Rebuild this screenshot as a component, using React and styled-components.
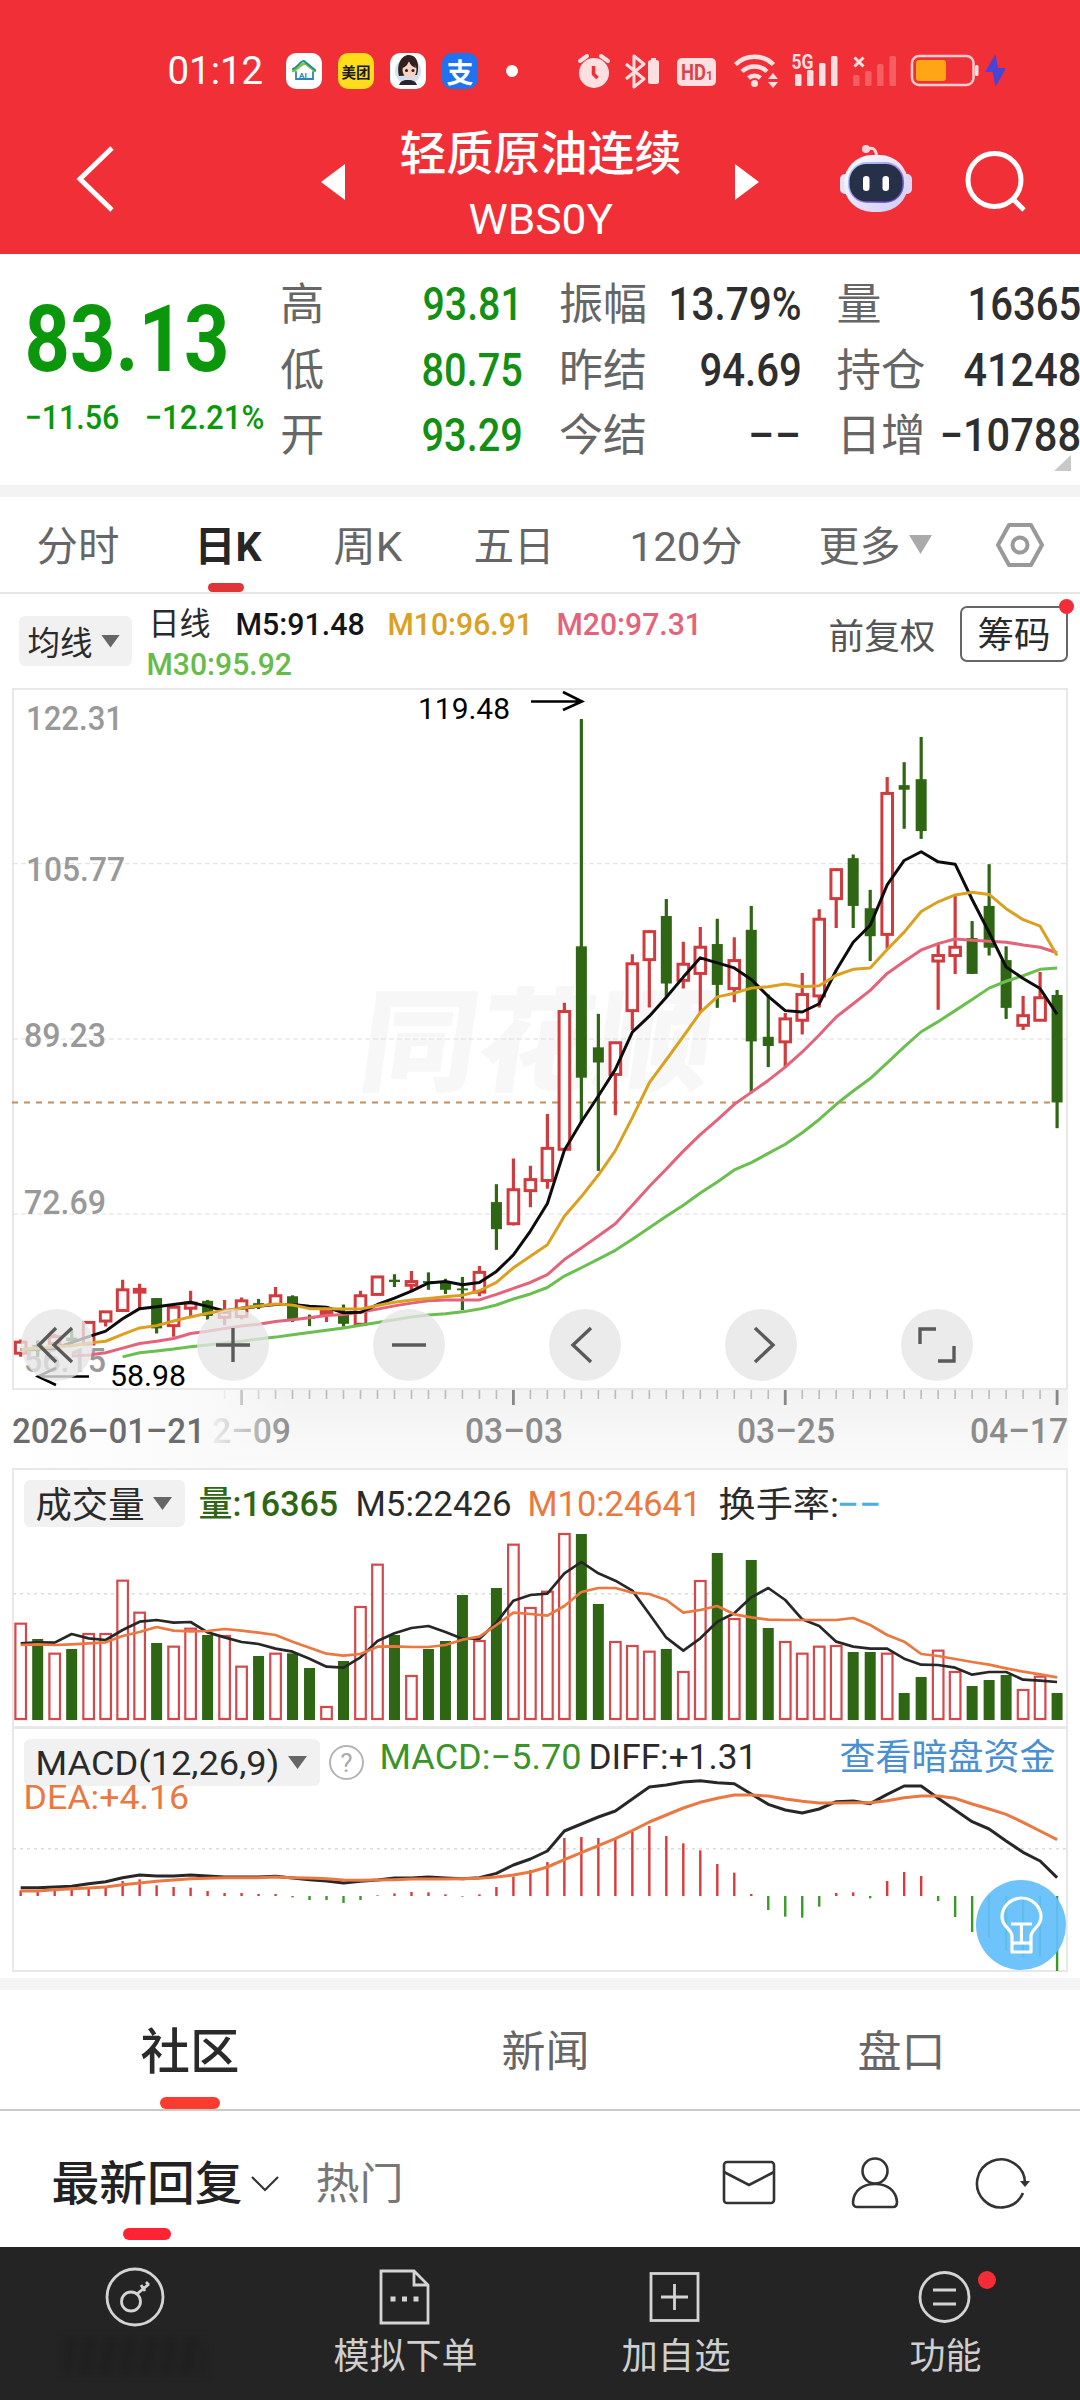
import React, { useLayoutEffect, useRef, useState } from "react";
import styled, { createGlobalStyle } from "styled-components";

const GlobalStyle = createGlobalStyle`
  * { box-sizing: border-box; }
  body {
    margin: 0;
    background: #fff;
    font-family: Roboto, "Noto Sans CJK SC", sans-serif;
    color: #2a2a2a;
  }
  svg { display: block; flex: none; }
`

/* ---------- text that fills a fixed width ---------- */

const FitBox = styled.div`
  flex: none;
  width: ${p => p.$w}px;
  margin-left: ${p => p.$ml || 0}px;
  height: ${p => p.$size}px;
  line-height: ${p => p.$size}px;
  font-size: ${p => p.$size}px;
  font-weight: ${p => p.$weight || 400};
  color: ${p => p.$color || 'inherit'};
  white-space: nowrap;
`
const FitInner = styled.span`
  display: inline-block;
  transform-origin: 0 50%;
`

const Fit = ({ w, ml, size, weight, color, dy = 0, children }) => {
  const ref = useRef(null)
  const [scale, setScale] = useState(1)
  useLayoutEffect(() => {
    setScale((w + 2) / ref.current.offsetWidth)
  }, [w, children])
  return (
    <FitBox $w={w} $ml={ml} $size={size} $weight={weight} $color={color}>
      <FitInner ref={ref} style={{ transform: `translate(-0.5px, ${dy}px) scaleX(${scale})` }}>{children}</FitInner>
    </FitBox>
  )
}

/* ---------- header ---------- */

const Page = styled.div`
  width: 1080px;
  height: 2400px;
  overflow: hidden;
  display: flex;
  flex-direction: column;
  background: #fff;
`
const Header = styled.header`
  height: 254px;
  background: #f12f37;
  color: #fff;
  display: flex;
  flex-direction: column;
  padding-top: 46px;
`
const StatusBar = styled.div`
  height: 50px;
  display: flex;
  align-items: center;
  padding-left: 168px;
`
const AppBadge = styled.div`
  width: 36px;
  height: 36px;
  margin-left: ${p => p.$ml || 16}px;
  border-radius: 10px;
  overflow: hidden;
  background: ${p => p.$bg};
  color: ${p => p.$color || '#fff'};
  display: flex;
  align-items: center;
  justify-content: center;
  font-size: ${p => p.$size || 15}px;
  font-weight: 700;
  white-space: nowrap;
`
const Dot = styled.i`
  width: 12px;
  height: 12px;
  border-radius: 50%;
  background: #fff;
  margin: 0 55px 0 28px;
`
const NavBar = styled.div`
  height: 158px;
  display: flex;
  padding-left: 72px;
`
const NavIcon = styled.div`
  padding-top: ${p => p.$top}px;
  margin-left: ${p => p.$ml || 0}px;
`
const TitleCol = styled.div`
  width: 280px;
  margin-left: 55px;
  padding-top: 34px;
  display: flex;
  flex-direction: column;
  align-items: center;
  gap: 21px;
`

const StatusIcons = () => (
  <svg width="440" height="50" viewBox="573 46 440 50" fill="#ffdfe0">
    <circle cx="594" cy="73" r="15" />
    <path d="M580 61l7-5M608 61l-7-5" stroke="#ffdfe0" strokeWidth="4" strokeLinecap="round" />
    <path d="M593.500 66v8l4 4" stroke="#f12f37" strokeWidth="3.500" fill="none" />
    <path d="M626 64l18 15-10 8V56l10 8-18 15" stroke="#ffdfe0" strokeWidth="3" fill="none" strokeLinejoin="round" />
    <rect x="648" y="60" width="11" height="24" rx="2.500" />
    <rect x="651" y="58" width="5" height="3" />
    <rect x="677" y="58" width="39" height="28" rx="5" />
    <text x="681" y="80" fontSize="22" fontWeight="700" fill="#d8444b" textLength="25" lengthAdjust="spacingAndGlyphs">HD</text>
    <text x="706" y="80" fontSize="12" fontWeight="700" fill="#d8444b">1</text>
    <g fill="none" stroke="#ffdfe0" strokeWidth="4.500">
      <path d="M735.500 64.500a27 27 0 0 1 38 0" />
      <path d="M742 71.500a18 18 0 0 1 25 0" />
      <path d="M748.500 78a9 9 0 0 1 12 0" />
    </g>
    <circle cx="754.500" cy="83.500" r="3.500" />
    <path d="M768 79l5-6 5 6zM768 82l5 6 5-6z" />
    <text x="791.500" y="69" fontSize="19.500" fontWeight="700" textLength="22" lengthAdjust="spacingAndGlyphs">5G</text>
    <rect x="795" y="74" width="6.500" height="12" rx="1.500" />
    <rect x="807" y="70" width="6.500" height="16" rx="1.500" />
    <rect x="819" y="63" width="6.500" height="23" rx="1.500" />
    <rect x="831" y="56" width="6.500" height="30" rx="1.500" />
    <path d="M854.500 57.500l9 9M863.500 57.500l-9 9" stroke="#ffdfe0" strokeWidth="3" />
    <g fill="#f75e64">
      <rect x="853" y="75" width="6.500" height="11" rx="1.500" />
      <rect x="865" y="71" width="6.500" height="15" rx="1.500" />
      <rect x="877" y="64" width="6.500" height="22" rx="1.500" />
      <rect x="889.500" y="56" width="6.500" height="30" rx="1.500" />
    </g>
    <rect x="912" y="56" width="61.500" height="29" rx="7" fill="none" stroke="#ffcfd0" strokeWidth="2.500" />
    <rect x="916" y="60" width="30" height="21" rx="3" fill="#ffa516" />
    <rect x="975" y="65" width="3.500" height="11" rx="1.500" />
    <path d="M995.500 54l-10.500 18h7.500l3 15 10.500-19h-8z" fill="#4b43d6" />
  </svg>
)

const HouseIcon = () => (
  <svg width="36" height="36" viewBox="0 0 36 36" fill="none" strokeLinecap="round">
    <path d="M7 18c6-2 8-9 13-7l9 7" stroke="#7cc142" strokeWidth="2.500" />
    <path d="M7 16c5-2 7-8 11-8l11 9" stroke="#1b8f8f" strokeWidth="2" />
    <path d="M10 19v7h17v-7" stroke="#2a86b8" strokeWidth="1.800" />
    <text x="13" y="24.500" fontSize="8" fontWeight="700" fill="#2a86b8">AI</text>
  </svg>
)

const FaceIcon = () => (
  <svg width="36" height="36" viewBox="0 0 36 36">
    <circle cx="18" cy="18" r="13" fill="#cfe0f2" />
    <path d="M9 23C6 12 11 2 19 2s11 9 8 20z" fill="#33211e" />
    <ellipse cx="19.500" cy="17" rx="7" ry="8.500" fill="#f6d3c6" />
    <path d="M12 15c5-1 6-5 7-7 1 4 4 6 7 7l-2-9h-9z" fill="#33211e" />
    <circle cx="16.500" cy="17.500" r="1.500" fill="#2b1a18" />
    <circle cx="23" cy="17.500" r="1.500" fill="#2b1a18" />
    <path d="M9 32c2-5 6-5 9-5s7 0 9 5z" fill="#26262b" />
  </svg>
)

const Robot = () => (
  <svg width="72" height="68" viewBox="0 0 72 68">
    <defs>
      <linearGradient id="shell" x1="0" y1="0" x2="1" y2="1">
        <stop offset="0" stopColor="#fff" />
        <stop offset="1" stopColor="#cfc9f7" />
      </linearGradient>
      <linearGradient id="rim" x1="0" y1="0" x2="1" y2="1">
        <stop offset="0" stopColor="#a8e0f0" />
        <stop offset=".5" stopColor="#a78bf0" />
        <stop offset="1" stopColor="#5a38c8" />
      </linearGradient>
    </defs>
    <path d="M27 5.500c6-3 9 0 9.500 6" stroke="#fbd9e0" strokeWidth="3" fill="none" />
    <circle cx="26" cy="5" r="4" fill="#f7d5dc" />
    <rect x="0" y="30" width="12" height="20" rx="5" fill="#e2e2fb" />
    <rect x="60" y="30" width="12" height="20" rx="5" fill="#dcd5f8" />
    <rect x="4" y="11" width="64" height="57" rx="28" fill="url(#shell)" />
    <rect x="8" y="18" width="56" height="41" rx="19" fill="url(#rim)" />
    <rect x="9.500" y="20" width="53" height="37.500" rx="17" fill="#263149" />
    <rect x="23" y="32" width="6.500" height="15" rx="3.200" fill="#fff" />
    <rect x="42.500" y="32" width="6.500" height="15" rx="3.200" fill="#fff" />
  </svg>
)

/* ---------- quote ---------- */

const Quote = styled.section`
  height: 243px;
  border-bottom: 12px solid #f3f3f3;
  display: flex;
`
const PriceCol = styled.div`
  width: 281px;
  padding: 40px 0 0 25px;
  color: #0b970b;
`
const ChangeRow = styled.div`
  display: flex;
  margin-top: 14px;
`
const StatCol = styled.div`
  width: ${p => p.$w}px;
  margin-right: ${p => p.$mr || 0}px;
  padding-top: 16px;
  position: relative;
`
const StatRow = styled.div`
  height: 65.700px;
  display: flex;
  align-items: center;
  justify-content: space-between;
`
const Corner = styled.i`
  position: absolute;
  right: 9px;
  top: 201px;
  border-left: 17px solid transparent;
  border-bottom: 16px solid #c9c9c9;
`

const stats = [
  { w: 241, mr: 38, color: '#139013', rows: [['高', 42, '93.81', 98], ['低', 42, '80.75', 99], ['开', 42, '93.29', 99]] },
  { w: 241, mr: 37, color: '#2e2e2e', rows: [['振幅', 86, '13.79%', 131], ['昨结', 86, '94.69', 100], ['今结', 86, '−−', 52]] },
  { w: 243, color: '#2e2e2e', rows: [['量', 43, '16365', 112], ['持仓', 87, '41248', 116], ['日增', 87, '−10788', 140]] },
]

/* ---------- period tabs ---------- */

const Tabs = styled.nav`
  height: 97px;
  border-bottom: 2px solid #e6e6e6;
  display: flex;
  align-items: center;
  padding-left: 37px;
  color: #666;
`
const Tab = styled.div`
  height: 95px;
  display: flex;
  align-items: center;
  position: relative;
  margin-left: ${p => p.$ml || 0}px;
  color: ${p => (p.$active ? '#262626' : 'inherit')};
`
const Mark = styled.i`
  position: absolute;
  left: ${p => p.$left || '50%'};
  bottom: ${p => p.$bottom || 0}px;
  width: ${p => p.$w}px;
  height: ${p => p.$h}px;
  margin-left: ${p => -p.$w / 2}px;
  border-radius: ${p => p.$h / 2}px;
  background: ${p => p.$color};
`
const Caret = styled.i`
  width: ${p => p.$w || 19}px;
  height: ${p => p.$h || 13}px;
  margin-left: ${p => p.$ml || 9}px;
  background: ${p => p.$color || '#666'};
  clip-path: polygon(0 0, 100% 0, 50% 100%);
`

/* ---------- moving averages ---------- */

const MaBar = styled.div`
  height: 94px;
  display: flex;
  padding-left: 19px;
`
const Chip = styled.div`
  height: ${p => p.$h}px;
  width: ${p => p.$w}px;
  margin-top: ${p => p.$mt || 0}px;
  flex: none;
  padding-left: ${p => p.$pl}px;
  border-radius: 6px;
  background: #f1f1f1;
  display: flex;
  align-items: center;
`
const MaLines = styled.div`
  width: 667px;
  padding: 14px 0 0 15px;
  display: flex;
  flex-wrap: wrap;
  align-content: flex-start;
  row-gap: 8px;
`
const Adjust = styled.div`
  margin-left: 30px;
  padding-top: 25px;
`
const Outline = styled.div`
  position: relative;
  width: 108px;
  height: 56px;
  margin: 12px 0 0 26px;
  border: 2px solid #666;
  border-radius: 7px;
  display: flex;
  align-items: center;
  padding-left: 16px;
`
const RedDot = styled.i`
  position: absolute;
  width: ${p => p.$s}px;
  height: ${p => p.$s}px;
  right: ${p => p.$right}px;
  top: ${p => p.$top}px;
  border-radius: 50%;
  background: #f42c37;
`

/* ---------- charts ---------- */

const COUNT = 62
const px = i => 20.7 + i * 16.99
const UP = '#d23b3d'
const DOWN = '#2f6614'

// [direction, high, body top, body bottom, low]
const candles = [
  ['u', 1436, 1442, 1466, 1474], ['d', 1438, 1448, 1452, 1474], ['u', 1424, 1430, 1445, 1458], ['d', 1415, 1432, 1440, 1446],
  ['u', 1397, 1399, 1446, 1448], ['u', 1374, 1376, 1396, 1408], ['u', 1306, 1328, 1373, 1375], ['u', 1315, 1327, 1333, 1370],
  ['d', 1346, 1346, 1412, 1423], ['u', 1362, 1366, 1406, 1430], ['u', 1330, 1357, 1368, 1385], ['d', 1350, 1352, 1385, 1393],
  ['u', 1350, 1377, 1388, 1405], ['u', 1345, 1352, 1386, 1392], ['d', 1348, 1357, 1361, 1370], ['u', 1322, 1341, 1360, 1362],
  ['d', 1340, 1342, 1392, 1398], ['d', 1382, 1387, 1391, 1407], ['u', 1370, 1375, 1381, 1398], ['d', 1360, 1382, 1402, 1408],
  ['u', 1330, 1341, 1403, 1405], ['u', 1299, 1300, 1338, 1340], ['d', 1294, 1306, 1311, 1322], ['u', 1287, 1310, 1318, 1330],
  ['d', 1290, 1309, 1313, 1328], ['d', 1304, 1311, 1328, 1337], ['d', 1300, 1325, 1329, 1372], ['u', 1276, 1290, 1333, 1342],
  ['d', 1098, 1137, 1196, 1241], ['u', 1042, 1110, 1184, 1188], ['u', 1058, 1088, 1112, 1148], ['u', 945, 1020, 1090, 1108],
  ['u', 703, 722, 1022, 1024], ['d', 85, 580, 866, 965], ['d', 727, 800, 833, 1069], ['u', 788, 790, 859, 948],
  ['u', 597, 618, 720, 762], ['u', 545, 548, 609, 713], ['d', 477, 514, 661, 690], ['u', 570, 619, 654, 672],
  ['u', 538, 582, 639, 724], ['d', 520, 575, 664, 714], ['u', 560, 611, 672, 702], ['d', 492, 544, 787, 900],
  ['d', 685, 777, 797, 843], ['u', 725, 738, 788, 843], ['u', 638, 685, 741, 772], ['u', 499, 521, 688, 713],
  ['u', 410, 413, 476, 540], ['d', 380, 388, 492, 540], ['d', 457, 497, 558, 612], ['u', 211, 247, 554, 585],
  ['d', 179, 229, 239, 324], ['d', 124, 216, 329, 346], ['u', 574, 600, 612, 718], ['u', 468, 582, 600, 640],
  ['d', 525, 562, 640, 640], ['d', 401, 492, 583, 600], ['d', 580, 610, 714, 738], ['u', 688, 731, 752, 762],
  ['u', 636, 692, 741, 742], ['d', 675, 686, 920, 976],
]
const ma5 = [1458, 1457, 1455, 1443, 1430, 1418, 1391, 1369, 1365, 1360, 1355, 1364, 1374, 1368, 1364, 1360, 1360, 1364, 1366, 1378, 1377, 1360, 1346, 1331, 1313, 1310, 1317, 1312, 1288, 1252, 1200, 1140, 1024, 962, 906, 848, 767, 732, 691, 647, 605, 616, 627, 652, 689, 720, 723, 705, 632, 571, 534, 446, 393, 374, 396, 401, 478, 550, 625, 650, 672, 728]
const ma10 = [1458, 1456, 1452, 1450, 1444, 1440, 1425, 1411, 1406, 1396, 1387, 1379, 1373, 1368, 1363, 1359, 1361, 1369, 1369, 1370, 1370, 1362, 1355, 1350, 1347, 1343, 1340, 1330, 1312, 1280, 1255, 1230, 1168, 1125, 1078, 1025, 953, 877, 827, 776, 724, 690, 682, 671, 668, 662, 668, 666, 643, 630, 627, 587, 549, 504, 483, 468, 462, 467, 498, 522, 536, 600]
const ma20 = [1472, 1470, 1465, 1455, 1445, 1440, 1434, 1423, 1418, 1412, 1407, 1403, 1397, 1393, 1389, 1384, 1382, 1377, 1370, 1363, 1357, 1352, 1350, 1350, 1350, 1338, 1325, 1312, 1295, 1262, 1237, 1211, 1184, 1144, 1103, 1065, 1026, 990, 958, 924, 898, 872, 843, 810, 773, 734, 705, 676, 639, 613, 588, 574, 564, 567, 569, 571, 577, 582, 594]
const ma30 = [1474, 1465, 1461, 1457, 1452, 1448, 1444, 1440, 1435, 1431, 1426, 1421, 1416, 1411, 1405, 1399, 1393, 1387, 1383, 1380, 1376, 1370, 1361, 1348, 1337, 1323, 1298, 1280, 1261, 1242, 1218, 1193, 1168, 1144, 1117, 1093, 1067, 1051, 1031, 1011, 986, 957, 924, 895, 868, 834, 799, 766, 744, 720, 696, 671, 656, 644, 630, 627]

const volumes = [728, 777, 818, 807, 759, 759, 599, 695, 789, 797, 743, 765, 765, 857, 828, 818, 820, 864, 978, 843, 678, 551, 765, 885, 807, 783, 645, 780, 624, 491, 681, 632, 459, 462, 672, 783, 795, 812, 807, 873, 600, 519, 714, 540, 744, 783, 818, 797, 795, 816, 816, 818, 939, 891, 809, 873, 918, 900, 885, 927, 887, 939]
const volDown = [1, 3, 8, 11, 14, 16, 17, 19, 22, 24, 25, 26, 28, 33, 34, 38, 41, 43, 44, 49, 50, 52, 53, 56, 57, 58, 61]
const vol5 = [790, 787, 788, 762, 775, 780, 750, 725, 720, 728, 726, 757, 772, 786, 792, 806, 815, 836, 860, 863, 832, 783, 760, 744, 738, 756, 776, 776, 728, 662, 645, 641, 580, 546, 580, 602, 632, 702, 773, 812, 775, 725, 700, 652, 624, 660, 718, 738, 785, 800, 806, 806, 836, 854, 855, 863, 884, 876, 876, 899, 902, 906]
const vol10 = [795, 793, 795, 793, 790, 787, 768, 756, 741, 752, 754, 753, 747, 752, 758, 765, 785, 803, 821, 827, 822, 800, 799, 801, 801, 795, 779, 770, 735, 698, 702, 707, 678, 636, 624, 624, 638, 642, 660, 698, 690, 678, 703, 712, 719, 720, 720, 720, 720, 714, 735, 765, 785, 822, 828, 837, 846, 854, 865, 875, 883, 892]

const hist = [496, 496, 496, 494, 490, 485, 468, 463, 481, 486, 488, 498, 504, 504, 507, 507, 517, 525, 525, 534, 525, 511, 505, 501, 502, 508, 515, 508, 486, 455, 435, 411, 339, 336, 339, 341, 321, 303, 333, 355, 376, 417, 443, 507, 555, 575, 578, 545, 504, 502, 520, 468, 441, 453, 528, 576, 621, 636, 675, 695, 695, 738]
const diff = [488, 488, 486, 484, 476, 470, 458, 450, 453, 453, 450, 453, 456, 456, 456, 454, 459, 464, 468, 474, 469, 465, 459, 459, 456, 459, 461, 458, 445, 420, 402, 378, 318, 297, 276, 258, 222, 186, 180, 171, 167, 173, 176, 207, 238, 255, 264, 252, 230, 228, 236, 208, 183, 183, 220, 255, 290, 312, 348, 382, 408, 458]
const dea = [498, 498, 494, 491, 489, 486, 479, 474, 469, 465, 461, 460, 458, 458, 458, 456, 458, 459, 461, 465, 466, 465, 464, 462, 462, 462, 461, 460, 456, 450, 441, 426, 404, 383, 362, 341, 317, 291, 270, 249, 232, 220, 210, 210, 213, 222, 229, 234, 234, 233, 233, 227, 218, 213, 213, 220, 237, 252, 268, 292, 318, 344]

const Line = ({ data, y, color, width = 3 }) => (
  <polyline
    points={data.map((v, i) => `${px(i + COUNT - data.length)},${y(v)}`).join(' ')}
    fill="none"
    stroke={color}
    strokeWidth={width}
    strokeLinejoin="round"
  />
)

const ChartWrap = styled.section`
  position: relative;
  height: 780px;
  flex: none;
`
const Controls = styled.div`
  position: absolute;
  left: 21px;
  top: 621px;
  display: flex;
  gap: 104px;
`
const RoundBtn = styled.button`
  width: 72px;
  height: 72px;
  padding: 0;
  border: none;
  border-radius: 50%;
  background: rgba(230, 230, 230, 0.78);
  display: flex;
  align-items: center;
  justify-content: center;
`

const ky = v => v * 0.4592 - 8
const prices = [['122.31', 26, 42, 97], ['105.77', 26, 193, 99], ['89.23', 24, 359, 82], ['72.69', 24, 526, 82], ['56.15', 24, 684, 82]]
const dates = [['2–09', 212, 79], ['03–03', 465, 98], ['03–25', 737, 98], ['04–17', 970, 98]]
const controls = [
  'M15-17L-3 0L15 17M-1-17L-18 0L-1 17',
  'M-17 0H17M0-17V17',
  'M-17 0H17',
  'M6-17L-12 0L6 17',
  'M-6-17L12 0L-6 17',
  'M-17-1V-16H-1M1 16H17V1',
]

const KLine = () => (
  <ChartWrap>
    <svg width="1080" height="780" viewBox="0 0 1080 780">
      <defs>
        <linearGradient id="axisBg" x1="0" y1="0" x2="0" y2="1">
          <stop offset="0" stopColor="#f2f2f2" />
          <stop offset="1" stopColor="#fbfbfb" />
        </linearGradient>
        <linearGradient id="axisFade">
          <stop offset="0" stopColor="#fff" />
          <stop offset=".7" stopColor="#fafafa" />
          <stop offset="1" stopColor="#fafafa" stopOpacity="0" />
        </linearGradient>
      </defs>
      <rect x="0" y="702" width="1068" height="78" fill="url(#axisBg)" />
      {Array.from({ length: COUNT - 12 }, (_, k) => k + 12).map(i => (
        <rect key={i} x={px(i) - ((i - 13) % 16 ? 0.8 : 1.4)} y="702" width={(i - 13) % 16 ? 1.6 : 2.8} height={(i - 13) % 16 ? 9 : 15} fill={(i - 13) % 16 ? '#bbb' : '#888'} />
      ))}
      {dates.map(d => (
        <text key={d[0]} x={d[1]} y="755" fontSize="35" fontWeight="500" fill="#8c8c8c" textLength={d[2]} lengthAdjust="spacingAndGlyphs">{d[0]}</text>
      ))}
      <rect x="0" y="702" width="290" height="78" fill="url(#axisFade)" />
      <text x="12" y="755" fontSize="35" fontWeight="500" fill="#6c6c6c" textLength="193" lengthAdjust="spacingAndGlyphs">2026–01–21</text>

      <rect x="13" y="1" width="1054" height="700" fill="#fff" stroke="#e8e8e8" strokeWidth="2" />
      <text transform="translate(356 394) skewX(-8)" fontSize="112" fontWeight="900" fill="#f7f7f7" textLength="352" lengthAdjust="spacingAndGlyphs">同花顺</text>
      {[175.7, 351, 526].map(y => (
        <path key={y} d={`M13 ${y}H1067`} stroke="#dedede" strokeWidth="1" strokeDasharray="5 3" />
      ))}
      <path d="M12 414.500H1056" stroke="#c0905f" strokeWidth="1.800" strokeDasharray="6 6" />
      {prices.map(p => (
        <text key={p[0]} x={p[1]} y={p[2]} fontSize="34" fontWeight="500" fill="#999" textLength={p[3]} lengthAdjust="spacingAndGlyphs">{p[0]}</text>
      ))}
      {candles.map(([dir, h, t, b, l], i) => (dir === 'd' ? (
        <g key={i} fill={DOWN}>
          <rect x={px(i) - 1.6} y={ky(h)} width="3.200" height={ky(l) - ky(h)} />
          <rect x={px(i) - 5.5} y={ky(t)} width="11" height={ky(b) - ky(t)} />
        </g>
      ) : (
        <g key={i}>
          <path d={`M${px(i)} ${ky(h)}V${ky(t)}M${px(i)} ${ky(b)}V${ky(l)}`} stroke={UP} strokeWidth="3.200" />
          <rect x={px(i) - 5.3} y={ky(t)} width="10.600" height={ky(b) - ky(t)} fill="#fff" stroke={UP} strokeWidth="3" />
        </g>
      )))}
      <Line data={ma30} y={ky} color="#6abf4f" />
      <Line data={ma20} y={ky} color="#e5637a" />
      <Line data={ma5} y={ky} color="#0c0c0c" />
      <Line data={ma10} y={ky} color="#dba01f" />
      <g fill="none" stroke="#000" strokeWidth="2.600">
        <path d="M531 13.500H581M563 4L582 13.500L563 22" />
        <path d="M89 688.500H38M56 680L38 688.500L56 697" />
      </g>
      <text x="418" y="31" fontSize="30" textLength="92" lengthAdjust="spacingAndGlyphs">119.48</text>
      <text x="110" y="698" fontSize="30" textLength="76" lengthAdjust="spacingAndGlyphs">58.98</text>
    </svg>
    <Controls>
      {controls.map(d => (
        <RoundBtn key={d}>
          <svg width="72" height="72" viewBox="-36 -36 72 72"><path d={d} fill="none" stroke="#5a5a5a" strokeWidth="3.400" /></svg>
        </RoundBtn>
      ))}
    </Controls>
  </ChartWrap>
)

const Panel = styled.section`
  position: relative;
  flex: none;
  height: ${p => p.$h}px;
`
const Legend = styled.div`
  position: absolute;
  left: 24px;
  right: 0;
  top: 12px;
  display: flex;
  align-items: center;
`
const LegendWrap = styled(Legend)`
  top: 53px;
`

const vy = v => v / 3 - 88
const Volume = () => (
  <Panel $h={259}>
    <svg width="1080" height="259" viewBox="0 0 1080 259">
      <rect x="13" y="1" width="1054" height="258" fill="none" stroke="#e8e8e8" strokeWidth="2" />
      <path d="M13 125.700H1067" stroke="#dcdcdc" strokeWidth="1.500" strokeDasharray="3 4" />
      {volumes.map((v, i) => (volDown.includes(i) ? (
        <rect key={i} x={px(i) - 5.5} y={vy(v)} width="11" height={252 - vy(v)} fill={DOWN} />
      ) : (
        <rect key={i} x={px(i) - 5.3} y={vy(v) + 1} width="10.600" height={250 - vy(v)} fill="#fff" stroke="#d5494c" strokeWidth="2.200" />
      )))}
      <Line data={vol5} y={vy} color="#272727" width={2.7} />
      <Line data={vol10} y={vy} color="#ea7840" width={2.7} />
    </svg>
    <Legend>
      <Chip $w={161} $h={47} $pl={12}>
        <Fit w={107} size={36} dy={2}>成交量</Fit>
        <Caret $ml={10} />
      </Chip>
      <Fit w={138} ml={14} size={35} dy={1} color="#2f6614" weight={500}>量:16365</Fit>
      <Fit w={154} ml={19} size={35} dy={1} color="#2a2a2a">M5:22426</Fit>
      <Fit w={172} ml={18} size={35} dy={1} color="#ea7840">M10:24641</Fit>
      <Fit w={118} ml={19} size={35} dy={2} color="#2a2a2a">换手率:</Fit>
      <Fit w={42} ml={0} size={34} color="#4aaee0" weight={500}>−−</Fit>
    </Legend>
  </Panel>
)

const HelpMark = styled.div`
  width: 35px;
  height: 35px;
  margin-left: 9px;
  border: 2px solid #b5b5b5;
  border-radius: 50%;
  color: #aaa;
  font-size: 26px;
  line-height: 32px;
  text-align: center;
`
const Bulb = styled.button`
  position: absolute;
  left: 976px;
  top: 153px;
  width: 90px;
  height: 90px;
  padding: 0;
  border: none;
  border-radius: 50%;
  background: rgba(99, 191, 250, 0.93);
`

const my = v => v / 3 - 2
const Macd = () => (
  <Panel $h={251}>
    <svg width="1080" height="251" viewBox="0 0 1080 251">
      <rect x="13" y="1" width="1054" height="243" fill="none" stroke="#e8e8e8" strokeWidth="2" />
      <path d="M13 121.700H1067" stroke="#dcdcdc" strokeWidth="1.500" strokeDasharray="3 4" />
      {hist.map((v, i) => (
        <rect key={i} x={px(i) - 1.2} y={Math.min(my(v), 169)} width="2.400" height={Math.abs(my(v) - 169)} fill={v < 513 ? '#d93a3a' : '#3a9a26'} />
      ))}
      <Line data={diff} y={my} color="#272727" />
      <Line data={dea} y={my} color="#ea7840" />
    </svg>
    <Legend>
      <Chip $w={296} $h={47} $pl={12}>
        <Fit w={242} size={34}>MACD(12,26,9)</Fit>
        <Caret $ml={10} />
      </Chip>
      <HelpMark>?</HelpMark>
      <Fit w={200} ml={16} size={35} dy={-5} color="#3a9428">MACD:−5.70</Fit>
      <Fit w={167} ml={9} size={35} dy={-5} color="#2a2a2a">DIFF:+1.31</Fit>
      <Fit w={214} ml={84} size={36} dy={-5} color="#4a8fd4">查看暗盘资金</Fit>
    </Legend>
    <LegendWrap>
      <Fit w={164} size={34} color="#ea7840">DEA:+4.16</Fit>
    </LegendWrap>
    <Bulb>
      <svg width="90" height="90" viewBox="0 0 90 90" fill="none" stroke="#fff" strokeWidth="3.200">
        <path d="M36 72V56C35 48 26 47 26 37a19.500 19 0 0 1 39 0C65 47 56 48 55 56V72Z" strokeLinejoin="round" />
        <path d="M35 44h21M45.500 44v19" />
        <path d="M36 63h19" />
      </svg>
    </Bulb>
  </Panel>
)

/* ---------- community ---------- */

const Community = styled.nav`
  height: 133px;
  flex: none;
  border-top: 12px solid #f4f4f4;
  border-bottom: 2px solid #c9c9c9;
  display: flex;
  padding-left: 141px;
  color: #666;
`
const CommTab = styled.div`
  position: relative;
  height: 119px;
  padding-bottom: 1px;
  margin-left: ${p => p.$ml || 0}px;
  display: flex;
  align-items: center;
  color: ${p => (p.$active ? '#2a2a2a' : 'inherit')};
`
const Feed = styled.div`
  height: 136px;
  flex: none;
  padding-left: 52px;
  display: flex;
  align-items: center;
`
const FeedTab = styled.div`
  position: relative;
  height: 136px;
  display: flex;
  align-items: center;
  padding-top: 6px;
`

/* ---------- bottom bar ---------- */

const BottomBar = styled.footer`
  flex: 1;
  background: #242424;
  display: grid;
  grid-template-columns: repeat(4, 270px);
  color: #cfcfcf;
`
const Action = styled.div`
  position: relative;
  display: flex;
  flex-direction: column;
  align-items: center;
  padding-top: 20px;
  gap: 11px;
`
const Smudge = styled.div`
  width: 142px;
  height: 36px;
  background: repeating-linear-gradient(100deg, #1f1f1f 0 12px, #232323 12px 20px);
  filter: blur(3px);
`

const actions = [
  { key: 'key', icon: <><circle cx="30" cy="30" r="28" /><circle cx="26" cy="34.500" r="9.500" /><path d="M32 27L44 17M36 18l4 6M41 15l3 3" /></> },
  { key: 'doc', label: '模拟下单', w: 142, icon: <><path d="M6 4H39L53 18V56H6Z" /><path d="M39 4V18H53" /><path d="M15.500 32h5M27 32h5M38.500 32h5" strokeWidth="5" /></> },
  { key: 'plus', label: '加自选', w: 107, icon: <><rect x="6" y="6.500" width="47" height="47" /><path d="M16 30H43M29.500 17V43" /></> },
  { key: 'fn', label: '功能', w: 70, dot: true, icon: <><circle cx="29.500" cy="30" r="24.500" /><path d="M18 23H41M18 37H41" /></> },
]

const App = () => {
  return (
    <Page>
      <GlobalStyle />
      <Header>
        <StatusBar>
          <Fit w={94} size={38}>01:12</Fit>
          <AppBadge $bg="#fff" $ml={24}><HouseIcon /></AppBadge>
          <AppBadge $bg="#ffdd1a" $color="#1a1a1a" $size={14.5}>美团</AppBadge>
          <AppBadge $bg="#fff"><FaceIcon /></AppBadge>
          <AppBadge $bg="#1f72f0" $size={27}>支</AppBadge>
          <Dot />
          <StatusIcons />
        </StatusBar>
        <NavBar>
          <NavIcon $top={48}>
            <svg width="44" height="70" viewBox="0 0 44 70"><path d="M40 4L8 35L40 66" fill="none" stroke="#fff" strokeWidth="5" /></svg>
          </NavIcon>
          <NavIcon $top={68} $ml={205}>
            <svg width="24" height="36" viewBox="0 0 24 36"><path d="M24 0V36L0 18Z" fill="#fff" /></svg>
          </NavIcon>
          <TitleCol>
            <Fit w={280} size={47} weight={500}>轻质原油连续</Fit>
            <Fit w={142} size={43}>WBS0Y</Fit>
          </TitleCol>
          <NavIcon $top={68} $ml={55}>
            <svg width="24" height="36" viewBox="0 0 24 36"><path d="M0 0V36L24 18Z" fill="#fff" /></svg>
          </NavIcon>
          <NavIcon $top={48} $ml={81}><Robot /></NavIcon>
          <NavIcon $top={54} $ml={52}>
            <svg width="64" height="64" viewBox="0 0 64 64" fill="none" stroke="#fff" strokeWidth="5">
              <circle cx="30.500" cy="30" r="26.500" />
              <path d="M49 49L60 60" />
            </svg>
          </NavIcon>
        </NavBar>
      </Header>

      <Quote>
        <PriceCol>
          <Fit w={203} size={92} weight={700}>83.13</Fit>
          <ChangeRow>
            <Fit w={93} size={34} weight={500}>−11.56</Fit>
            <Fit w={118} ml={27} size={34} weight={500}>−12.21%</Fit>
          </ChangeRow>
        </PriceCol>
        {stats.map((col, n) => (
          <StatCol key={n} $w={col.w} $mr={col.mr}>
            {col.rows.map(([label, lw, value, vw]) => (
              <StatRow key={label}>
                <Fit w={lw} size={44} dy={2} color="#666">{label}</Fit>
                <Fit w={vw} size={46} dy={0.5} weight={500} color={col.color}>{value}</Fit>
              </StatRow>
            ))}
            {n === 2 && <Corner />}
          </StatCol>
        ))}
      </Quote>

      <Tabs>
        <Tab><Fit w={81} size={41} dy={2.5}>分时</Fit></Tab>
        <Tab $ml={77} $active>
          <Fit w={65} size={41} dy={2.5} weight={700}>日K</Fit>
          <Mark $w={36} $h={9} $left="47%" $color="#e03437" />
        </Tab>
        <Tab $ml={74}><Fit w={67} size={41} dy={2.5}>周K</Fit></Tab>
        <Tab $ml={73}><Fit w={79} size={41} dy={2.5}>五日</Fit></Tab>
        <Tab $ml={77}><Fit w={111} size={41} dy={2.5}>120分</Fit></Tab>
        <Tab $ml={78}>
          <Fit w={80} size={41} dy={2.5}>更多</Fit>
          <Caret $w={23} $h={19} $ml={10} $color="#aaa" />
        </Tab>
        <Tab $ml={63}>
          <svg width="50" height="46" viewBox="0 0 50 46" fill="none" stroke="#999" strokeWidth="4">
            <path d="M14 3H36L47 23L36 43H14L3 23Z" strokeLinejoin="round" />
            <circle cx="25" cy="23" r="7.500" />
          </svg>
        </Tab>
      </Tabs>

      <MaBar>
        <Chip $w={113} $h={50} $mt={22} $pl={9}>
          <Fit w={63} size={33} dy={2}>均线</Fit>
          <Caret $ml={10} />
        </Chip>
        <MaLines>
          <Fit w={60} ml={2} size={32}>日线</Fit>
          <Fit w={127} ml={27} size={32} weight={500} color="#151515">M5:91.48</Fit>
          <Fit w={143} ml={25} size={32} weight={500} color="#dba01f">M10:96.91</Fit>
          <Fit w={143} ml={26} size={32} weight={500} color="#e5637a">M20:97.31</Fit>
          <Fit w={143} size={32} weight={500} color="#65bc49">M30:95.92</Fit>
        </MaLines>
        <Adjust><Fit w={105} size={35} dy={1} color="#555">前复权</Fit></Adjust>
        <Outline>
          <Fit w={71} size={36} dy={2}>筹码</Fit>
          <RedDot $s={15} $right={-8} $top={-9} />
        </Outline>
      </MaBar>

      <KLine />
      <Volume />
      <Macd />

      <Community>
        <CommTab $active>
          <Fit w={97} size={49} dy={3} weight={500}>社区</Fit>
          <Mark $w={60} $h={12} $color="#f93b30" />
        </CommTab>
        <CommTab $ml={264}><Fit w={86} size={43} dy={3}>新闻</Fit></CommTab>
        <CommTab $ml={270}><Fit w={86} size={43} dy={3}>盘口</Fit></CommTab>
      </Community>

      <Feed>
        <FeedTab>
          <Fit w={189} size={47} weight={500} dy={1} color="#222">最新回复</Fit>
          <Mark $w={48} $h={12} $bottom={7} $color="#ff2334" />
        </FeedTab>
        <NavIcon $top={9} $ml={10}>
          <svg width="28" height="18" viewBox="0 0 28 18"><path d="M1 2L14 15L27 2" fill="none" stroke="#333" strokeWidth="2.200" /></svg>
        </NavIcon>
        <NavIcon $top={6} $ml={37}><Fit w={86} size={43} dy={1.5} color="#777">热门</Fit></NavIcon>
        <NavIcon $top={8} $ml={320}>
          <svg width="54" height="46" viewBox="0 0 54 46" fill="none" stroke="#333" strokeWidth="2.600">
            <rect x="2" y="2" width="50" height="41" rx="3" />
            <path d="M2 12L27 25L52 12" />
          </svg>
        </NavIcon>
        <NavIcon $top={8} $ml={75}>
          <svg width="48" height="52" viewBox="0 0 48 52" fill="none" stroke="#333" strokeWidth="2.600">
            <circle cx="24" cy="14" r="12.500" />
            <path d="M6 50Q2 50 2 45C3 33 12 27 24 27S45 33 46 45Q46 50 42 50Z" />
          </svg>
        </NavIcon>
        <NavIcon $top={7} $ml={76}>
          <svg width="56" height="52" viewBox="0 0 56 52" fill="none" stroke="#333" strokeWidth="2.600">
            <path d="M48 36A24 24 0 1 1 50 26" />
            <path d="M45 24H55L50 30Z" fill="#333" stroke="none" />
          </svg>
        </NavIcon>
      </Feed>

      <BottomBar>
        {actions.map(a => (
          <Action key={a.key}>
            <svg width="60" height="60" viewBox="0 0 60 60" fill="none" stroke="#d4d4d4" strokeWidth="2.800">{a.icon}</svg>
            {a.label ? <Fit w={a.w} size={36} dy={1}>{a.label}</Fit> : <Smudge />}
            {a.dot && <RedDot $s={18} $right={84} $top={24} />}
          </Action>
        ))}
      </BottomBar>
    </Page>
  )
}

export default App
